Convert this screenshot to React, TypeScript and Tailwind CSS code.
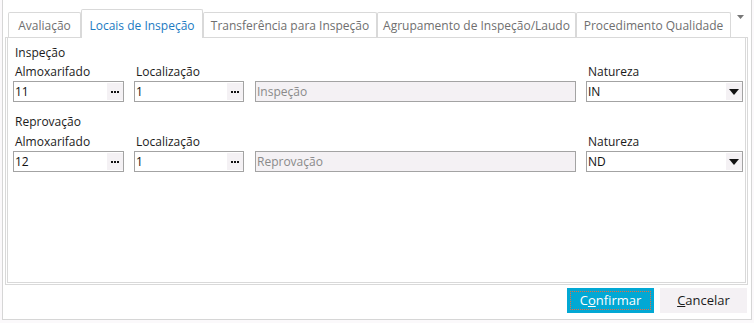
import { ReactNode } from "react";

const FONT = "font-['Open_Sans','Noto_Sans',sans-serif]";

const TABS = [
  { label: "Avaliação", width: "w-[73px]" },
  { label: "Locais de Inspeção", width: "w-[122px]", active: true },
  { label: "Transferência para Inspeção", width: "w-[174px]" },
  { label: "Agrupamento de Inspeção/Laudo", width: "w-[199px]" },
  { label: "Procedimento Qualidade", width: "w-[155px]" },
];

function Dots() {
  return (
    <div className="my-[1px] flex w-[16px] items-center justify-center bg-[#f4f1f4]">
      <svg width="8" height="2" viewBox="0 0 8 2">
        <rect x="0" y="0" width="2" height="2" fill="#111" />
        <rect x="3" y="0" width="2" height="2" fill="#111" />
        <rect x="6" y="0" width="2" height="2" fill="#111" />
      </svg>
    </div>
  );
}

function LookupInput({ value, width }: { value: string; width: string }) {
  return (
    <div className={`flex h-[21px] ${width} border border-[#a3a3a3] bg-white`}>
      <div className="flex-1 pl-[1px] text-[12px] leading-[19px] text-[#111]">{value}</div>
      <Dots />
    </div>
  );
}

function SelectInput({ value }: { value: string }) {
  return (
    <div className="flex h-[21px] w-[157px] border border-[#a3a3a3] bg-white">
      <div className="flex-1 pl-[1px] text-[12px] leading-[19px] text-[#111]">{value}</div>
      <div className="my-[1px] flex w-[16px] items-center justify-center bg-[#f4f1f4]">
        <svg width="10" height="6" viewBox="0 0 10 6">
          <path d="M0 0H10L5 6Z" fill="#111" />
        </svg>
      </div>
    </div>
  );
}

function Label({ children, className = "" }: { children: ReactNode; className?: string }) {
  return <div className={`h-[16px] pl-[2px] text-[12px] leading-[16px] text-[#1b1b1b] ${className}`}>{children}</div>;
}

function Section({
  title,
  almox,
  descricao,
  natureza,
  titleGap,
}: {
  title: string;
  almox: string;
  descricao: string;
  natureza: string;
  titleGap: string;
}) {
  return (
    <div className="flex flex-col">
      <Label>{title}</Label>
      <div className={`flex gap-[10px] ${titleGap}`}>
        <div className="flex flex-col gap-[1px]">
          <Label>Almoxarifado</Label>
          <LookupInput value={almox} width="w-[111px]" />
        </div>
        <div className="flex flex-col gap-[1px]">
          <Label>Localização</Label>
          <LookupInput value="1" width="w-[110px]" />
        </div>
        <div className="ml-[1px] flex flex-col gap-[1px]">
          <div className="h-[16px]" />
          <div className="h-[21px] w-[321px] border border-[#a3a3a3] bg-[#f4f1f4] pl-[1px] text-[12px] leading-[19px] text-[#8a8a8a]">
            {descricao}
          </div>
        </div>
        <div className="flex flex-col gap-[1px]">
          <Label>Natureza</Label>
          <SelectInput value={natureza} />
        </div>
      </div>
    </div>
  );
}

export default function App() {
  return (
    <div className={`h-[323px] w-[754px] overflow-hidden bg-[#fbf9fb] ${FONT}`}>
      <div className="ml-[2px] flex h-[320px] w-[750px] flex-col border-x border-b border-[#d6d6d6] bg-white">
        <div className="ml-[2px] flex w-[743px] flex-col">
          <div className="flex h-[38px] items-end border-b border-[#d9d9d9] pl-[3px]">
            {TABS.map((tab) =>
              tab.active ? (
                <div
                  key={tab.label}
                  className={`relative -mb-px flex h-[29px] ${tab.width} items-center justify-center rounded-t-[2px] border-x border-t border-[#d9d9d9] bg-white pt-[4px] text-[12px] text-[#1b7ac2]`}
                >
                  {tab.label}
                </div>
              ) : (
                <div
                  key={tab.label}
                  className={`flex h-[25px] ${tab.width} items-center justify-center rounded-t-[2px] border-x border-t border-[#d9d9d9] bg-white pt-[2px] text-[12px] text-[#6f6f6f]`}
                >
                  {tab.label}
                </div>
              ),
            )}
            <div className="mb-[18px] ml-[6px]">
              <svg width="7" height="4" viewBox="0 0 7 4">
                <path d="M0 0H7L3.5 4Z" fill="#777" />
              </svg>
            </div>
          </div>
          <div className="h-[247px] border-x border-b border-[#d9d9d9] px-[1px] pb-[1px]">
            <div className="flex h-full flex-col border-x border-b border-[#d9d9d9] pl-[5px] pt-[7px]">
              <Section title="Inspeção" almox="11" descricao="Inspeção" natureza="IN" titleGap="mt-[3px]" />
              <div className="mt-[12px]">
                <Section title="Reprovação" almox="12" descricao="Reprovação" natureza="ND" titleGap="mt-[4px]" />
              </div>
            </div>
          </div>
        </div>
        <div className="mr-[4px] mt-[3px] flex justify-end gap-[6px]">
          <button className="flex h-[25px] w-[87px] bg-[#02a8d4] p-[3px] text-[13px] text-white">
            <span className="flex flex-1 items-center justify-center border border-dotted border-[#f06a3c]">
              C<u>o</u>nfirmar
            </span>
          </button>
          <button className="flex h-[25px] w-[87px] items-center justify-center bg-[#f4f1f4] text-[13px] text-[#1b1b1b]">
            <u>C</u>ancelar
          </button>
        </div>
      </div>
    </div>
  );
}
